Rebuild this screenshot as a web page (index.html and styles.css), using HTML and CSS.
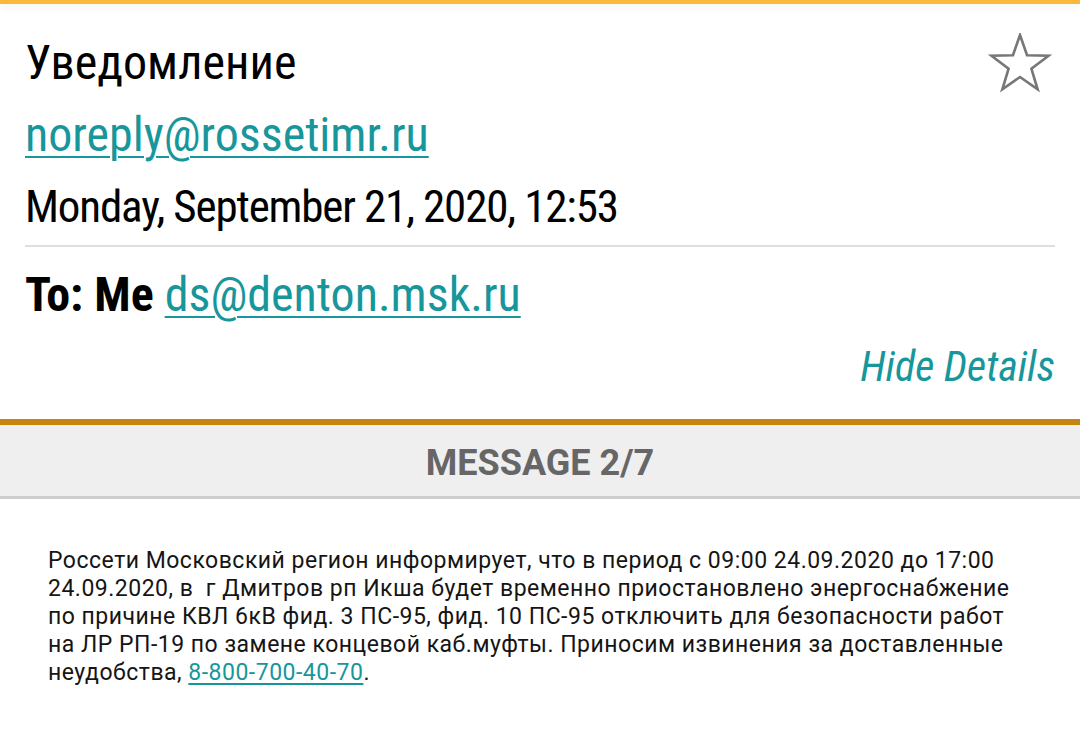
FILE: index.html
```html
<!DOCTYPE html>
<html lang="ru">
<head>
  <meta charset="UTF-8">
  <meta name="viewport" content="width=device-width, initial-scale=1.0">
  <title>Уведомление</title>
  <link rel="stylesheet" href="styles.css">
</head>
<body>
  <div class="topbar"></div>

  <div class="details">
    <div class="subject-row">
      <h1 class="subject">Уведомление</h1>
      <svg class="star" width="64" height="62" viewBox="0 0 64 62">
        <polygon points="32,2 39.05,22.29 60.53,22.73 43.41,35.71 49.63,56.27 32,44 14.37,56.27 20.59,35.71 3.47,22.73 24.95,22.29" fill="none" stroke="#777" stroke-width="2.6"/>
      </svg>
    </div>
    <a class="from" href="#">noreply@rossetimr.ru</a>
    <div class="date">Monday, September 21, 2020, 12:53</div>
    <div class="divider"></div>
    <div class="to"><b>To: Me</b> <a href="#">ds@denton.msk.ru</a></div>
    <div class="hide-row"><a class="hide" href="#">Hide Details</a></div>
  </div>

  <div class="counter">MESSAGE 2/7</div>

  <div class="message">
    <p>Россети Московский регион информирует, что в период с 09:00 24.09.2020 до 17:00 24.09.2020, в&nbsp; г Дмитров рп Икша будет временно приостановлено энергоснабжение по причине КВЛ 6кВ фид. 3 ПС-95, фид. 10 ПС-95 отключить для безопасности работ на ЛР РП-19 по замене концевой каб.муфты. Приносим извинения за доставленные неудобства, <a href="#">8-800-700-40-70</a>.</p>
  </div>
</body>
</html>
```

FILE: styles.css
```css
body {
  margin: 0;
  padding: 0;
  background-color: #fff;
  font-family: Roboto, "Noto Sans", sans-serif;
  color: #000;
}

a {
  color: #17969b;
}

.topbar {
  height: 4px;
  background-color: #fbb93b;
  box-shadow: 0 3px 9px rgba(0,0,0,0.07);
}

.details {
  padding: 23px 25px 16px;
  font-family: "Roboto Condensed", Roboto, sans-serif;
  font-stretch: condensed;
  font-size: 48px;
  line-height: 72px;
}

.subject-row {
  display: flex;
  justify-content: space-between;
  align-items: flex-start;
}

.subject {
  margin: 0;
  font-size: 48px;
  font-weight: normal;
}

.star {
  margin-top: 6px;
  margin-right: 3px;
}

.from {
  display: block;
  width: max-content;
  text-underline-offset: 5px;
  text-decoration-thickness: 2px;
}

.date {
  font-size: 45px;
  letter-spacing: -1.15px;
}

.divider {
  height: 2px;
  margin-top: 2px;
  background-color: #dedede;
}

.to {
  margin-top: 12px;
}

.to b {
  font-weight: bold;
}

.to a {
  text-underline-offset: 5px;
  text-decoration-thickness: 2px;
}

.hide-row {
  display: flex;
  justify-content: flex-end;
}

.hide {
  font-size: 42px;
  font-style: italic;
  text-decoration: none;
}

.counter {
  border-top: 6px solid #c4840f;
  border-bottom: 3px solid #cdcdcd;
  background-color: #efefef;
  height: 66px;
  padding-top: 5px;
  line-height: 66px;
  text-align: center;
  font-size: 36px;
  font-weight: bold;
  color: #666;
}

.message {
  width: 975px;
  padding: 48px 0 0 48px;
  font-size: 23px;
  line-height: 28px;
  letter-spacing: 0.5px;
  color: #151515;
}

.message p {
  margin: 0;
}

.message a {
  text-underline-offset: 3px;
}
```
